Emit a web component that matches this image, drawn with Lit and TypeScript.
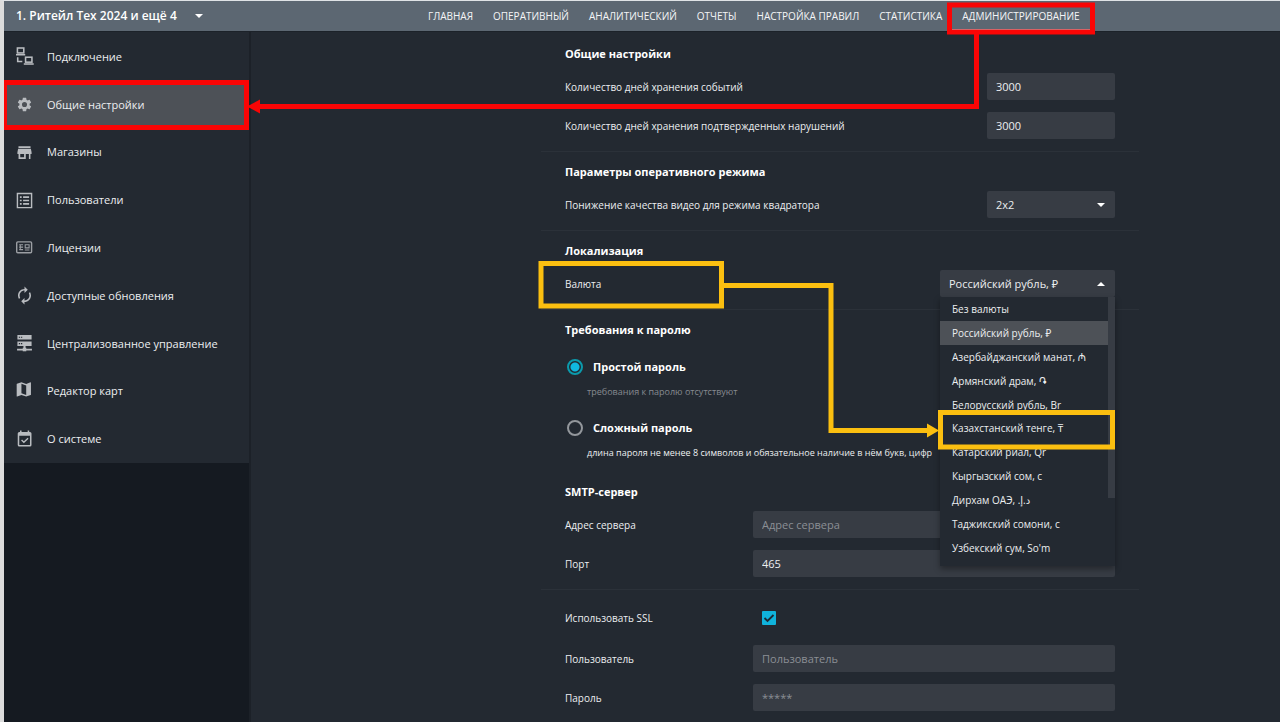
import { LitElement, html, css, svg } from "lit";
import { customElement, state } from "lit/decorators.js";

const icons: Record<string, unknown> = {
  link: svg`<g fill="none" stroke="currentColor" stroke-width="2.2"><rect x="2" y="0" width="9" height="7"/><path d="M0 9.400h13M2.400 13v6h6.500"/><rect x="13.500" y="13" width="9" height="7"/><path d="M11 22.600h14"/></g>`,
  gear: svg`<path fill="currentColor" d="M19.14 12.94c.04-.3.06-.61.06-.94 0-.32-.02-.64-.07-.94l2.03-1.58a.49.49 0 0 0 .12-.61l-1.92-3.32a.49.49 0 0 0-.59-.22l-2.39.96c-.5-.38-1.03-.7-1.62-.94l-.36-2.54a.48.48 0 0 0-.48-.41h-3.84c-.24 0-.43.17-.47.41l-.36 2.54c-.59.24-1.13.57-1.62.94l-2.39-.96a.48.48 0 0 0-.59.22L2.74 8.87c-.12.21-.08.47.12.61l2.03 1.58c-.05.3-.09.63-.09.94s.02.64.07.94l-2.03 1.58a.49.49 0 0 0-.12.61l1.92 3.32c.12.22.37.29.59.22l2.39-.96c.5.38 1.03.7 1.62.94l.36 2.54c.05.24.24.41.48.41h3.84c.24 0 .44-.17.47-.41l.36-2.54c.59-.24 1.13-.56 1.62-.94l2.39.96c.22.08.47 0 .59-.22l1.92-3.32a.48.48 0 0 0-.12-.61zM12 15.6a3.6 3.6 0 1 1 0-7.2 3.6 3.6 0 0 1 0 7.2z"/>`,
  store: svg`<path fill="currentColor" d="M3.500 3h17v2.600h-17zM3 6.600h18l1 5v2.600h-1.600V21h-2.200v-6.800h-4.400V21H3.600v-6.800H2v-2.600zm3 7.600v4.400h5.400v-4.400z"/>`,
  list: svg`<path fill="none" stroke="currentColor" stroke-width="2" d="M2 2h20v20H2z"/><path fill="currentColor" d="M5.500 6h2.500v2.400H5.500zM10 6h8.500v2.400H10zM5.500 10.800h2.500v2.400H5.500zM10 10.800h8.500v2.400H10zM5.500 15.600h2.500V18H5.500zM10 15.600h8.500V18H10z"/>`,
  card: svg`<g opacity=".8"><rect x="1" y="4" width="21" height="15.500" rx="1.500" fill="none" stroke="currentColor" stroke-width="2"/><path fill="none" stroke="currentColor" stroke-width="1.500" d="M4.500 8h5.500M4.500 11.500h5.500M4.500 15h5.500M6 8v7M13 8h5.500v4.500H13zM12.500 15.500h6.500"/></g>`,
  sync: svg`<path fill="currentColor" transform="translate(-1.800 -1.800) scale(1.150)" d="M12 6v3l4-4-4-4v3c-4.420 0-8 3.580-8 8 0 1.570.46 3.030 1.240 4.260L6.700 14.800A5.870 5.870 0 0 1 6 12c0-3.310 2.690-6 6-6zm6.760 1.740L17.300 9.200c.44.84.7 1.790.7 2.800 0 3.310-2.690 6-6 6v-3l-4 4 4 4v-3c4.420 0 8-3.580 8-8 0-1.570-.46-3.030-1.240-4.260z"/>`,
  server: svg`<path fill="currentColor" fill-rule="evenodd" d="M2 0h20v6.500H2zM4 2.300v1.600h1.800V2.300zm3 0v1.600h1.800V2.300zM2 9h20v6.500H2zM4 11.300v1.600h1.800v-1.600zm3 0v1.600h1.800v-1.600zM10.500 15.500h3V19h-3zM1.500 19.500h21v2.300h-21z"/><path fill="currentColor" d="M9.500 18h5v5h-5z"/>`,
  map: svg`<path fill="currentColor" fill-rule="evenodd" transform="translate(-2.400 -4.400) scale(1.120)" d="M20.500 3l-.16.030L15 5.100 9 3 3.360 4.900a.5.5 0 0 0-.36.480V20.500a.5.5 0 0 0 .66.470L9 18.900l6 2.100 5.640-1.900a.5.5 0 0 0 .36-.48V3.500a.5.5 0 0 0-.5-.5zM15 19l-6-2.110V5l6 2.110z"/>`,
  calendar: svg`<g transform="translate(-.8 -1.800) scale(1.080)"><path fill="currentColor" fill-rule="evenodd" d="M19 3h-1V1h-2v2H8V1H6v2H5a2 2 0 0 0-2 2v15a2 2 0 0 0 2 2h14a2 2 0 0 0 2-2V5a2 2 0 0 0-2-2zm0 17H5V8h14z"/><path fill="none" stroke="currentColor" stroke-width="1.800" d="M8 13.500l3 3 5.500-5.500"/></g>`,
};

const sections = [
  "ГЛАВНАЯ", "ОПЕРАТИВНЫЙ", "АНАЛИТИЧЕСКИЙ", "ОТЧЕТЫ",
  "НАСТРОЙКА ПРАВИЛ", "СТАТИСТИКА", "АДМИНИСТРИРОВАНИЕ",
];

const menu = [
  ["link", "Подключение"],
  ["gear", "Общие настройки"],
  ["store", "Магазины"],
  ["list", "Пользователи"],
  ["card", "Лицензии"],
  ["sync", "Доступные обновления"],
  ["server", "Централизованное управление"],
  ["map", "Редактор карт"],
  ["calendar", "О системе"],
];

// The trailing mark keeps the last dot of the dirham sign in its right-to-left run.
const currencies = [
  "Без валюты", "Российский рубль, ₽", "Азербайджанский манат, ₼",
  "Армянский драм, ֏", "Белорусский рубль, Br", "Казахстанский тенге, ₸",
  "Катарский риал, Qr", "Кыргызский сом, с", "Дирхам ОАЭ, د.إ.\u200f",
  "Таджикский сомони, с", "Узбекский сум, So'm",
];

@customElement("app-root")
export class AppRoot extends LitElement {
  @state() private currency = 1;

  static styles = css`
    :host {
      display: flex;
      flex-direction: column;
      position: relative;
      box-sizing: border-box;
      height: 100vh;
      overflow: hidden;
      border-top: 1px solid #dfe3e6;
      border-left: 4px solid #dcdcdc;
      background: #232931;
      color: #eceef0;
      font: 10px/20px "Open Sans", "Noto Sans", "DejaVu Sans", sans-serif;
    }
    *, *::before, *::after { box-sizing: border-box; }
    button, input, select { font: inherit; color: inherit; }
    header {
      flex: none;
      display: grid;
      grid-template-columns: 423fr auto 200fr;
      align-items: center;
      height: 31px;
      background: #5c6772;
      border-bottom: 1px solid #1c2229;
    }
    .site {
      justify-self: start;
      display: flex;
      align-items: center;
      gap: 18px;
      padding: 0 12px;
      border: 0;
      background: none;
      font-size: 12px;
      font-weight: 600;
      color: #fff;
    }
    .caret { width: 8px; height: 4px; fill: #fff; }
    .tabs { display: flex; gap: 20px; }
    .tabs a { position: relative; color: #f4f5f7; text-decoration: none; font-weight: 500; line-height: 28px; white-space: nowrap; }
    .tabs a.active::after { content: ""; position: absolute; left: -10px; right: -10px; bottom: 0; height: 1px; background: #b9c0c6; }
    .body { flex: 1; display: flex; min-height: 0; }
    aside { flex: none; width: 247px; background: #151a21; border-right: 2px solid #1c2128; }
    .menu {
      display: grid;
      grid-auto-rows: 1fr;
      height: 431px;
      padding-top: 1px;
      background: #232931;
    }
    .menu a {
      display: flex;
      align-items: center;
      gap: 14px;
      padding-left: 12px;
      color: inherit;
      font-size: 11px;
      text-decoration: none;
    }
    .menu a.active { background: #4d5157; }
    .menu svg { width: 17px; height: 17px; color: #b9bcc0; overflow: visible; }
    main {
      flex: 1;
      display: grid;
      grid-template-columns: 290fr minmax(auto, 598px) 141fr;
      align-content: start;
      padding-top: 2px;
    }
    form { grid-column: 2; }
    section { padding: 9px 24px 12px; border-bottom: 1px solid #2b3139; }
    section.open { border-bottom: 0; padding-bottom: 9px; }
    h2 { margin: 0 0 8px; font-size: 11px; line-height: 22px; font-weight: 700; color: #fff; }
    .row { display: flex; align-items: center; justify-content: space-between; height: 27px; }
    .row + .row { margin-top: 12px; }
    .row.wide { display: grid; grid-template-columns: 188px 1fr; }
    .row.tick { margin: 5px 0 14px; }
    .field {
      width: 128px;
      height: 27px;
      padding: 0 9px;
      border: 0;
      border-radius: 2px;
      background: #373c44;
      font-size: 11px;
      outline: none;
      appearance: none;
    }
    .wide .field { width: 100%; }
    .field::placeholder { color: #8b8f95; opacity: 1; }
    .pick { position: relative; }
    .pick > .caret { position: absolute; right: 10px; top: 12px; pointer-events: none; }
    .currency .field { width: 175px; display: block; }
    .list {
      position: absolute;
      z-index: 2;
      top: 100%;
      left: 0;
      right: 0;
      display: grid;
      grid-auto-rows: 1fr;
      height: 269px;
      margin: 0;
      padding: 0 7px 6px 0;
      list-style: none;
      background: #232931;
      box-shadow: 0 3px 6px rgba(0, 0, 0, 0.35);
    }
    .list li { display: flex; align-items: center; padding-left: 12px; white-space: nowrap; }
    .list li.chosen { background: #4d5157; }
    .thumb {
      position: absolute;
      z-index: 3;
      top: 100%;
      right: 0;
      width: 7px;
      height: 201px;
      background: #373c44;
    }
    .choices { display: grid; padding-top: 7px; }
    .choice { display: flex; align-items: center; gap: 10px; height: 22px; padding-left: 2px; font-size: 11px; font-weight: 700; color: #fff; }
    .hint { margin: 4px 0 0 22px; white-space: nowrap; width: 0; font-size: 9px; }
    .hint.muted { margin-bottom: 15px; color: #868a90; }
    input[type="radio"] {
      appearance: none;
      width: 16px;
      height: 16px;
      margin: 0;
      border: 2px solid #93979c;
      border-radius: 50%;
    }
    input[type="radio"]:checked {
      border-color: #0b9aac;
      background: radial-gradient(circle, #10b8e0 0 4px, transparent 5px);
    }
    .check { position: relative; display: flex; justify-self: start; margin-left: 9px; }
    .check input { appearance: none; width: 14px; height: 14px; margin: 0; border-radius: 1px; background: #10b3dc; }
    .check svg { position: absolute; inset: 0; width: 14px; height: 14px; pointer-events: none; }
    .marks { position: absolute; z-index: 5; top: -1px; left: -4px; width: 1280px; height: 722px; pointer-events: none; }
  `;

  private caret(up = false) {
    return html`<svg class="caret" viewBox="0 0 8 4" aria-hidden="true"><path d=${up ? "M0 4L4 0l4 4z" : "M0 0h8L4 4z"} /></svg>`;
  }

  render() {
    return html`
      <header>
        <button class="site" type="button">1. Ритейл Тех 2024 и ещё 4 ${this.caret()}</button>
        <nav class="tabs">${sections.map((s, i) => html`<a href="#" class=${i === 6 ? "active" : ""}>${s}</a>`)}</nav>
      </header>
      <div class="body">
        <aside>
          <nav class="menu">
            ${menu.map(([icon, text], i) => html`
              <a href="#" class=${i === 1 ? "active" : ""}>
                <svg viewBox="0 0 24 24" aria-hidden="true">${icons[icon]}</svg><span>${text}</span>
              </a>`)}
          </nav>
        </aside>
        <main>
          <form>
            <section>
              <h2>Общие настройки</h2>
              <div class="row"><label for="events">Количество дней хранения событий</label><input class="field" id="events" value="3000" /></div>
              <div class="row"><label for="faults">Количество дней хранения подтвержденных нарушений</label><input class="field" id="faults" value="3000" /></div>
            </section>
            <section>
              <h2>Параметры оперативного режима</h2>
              <div class="row">
                <label for="quality">Понижение качества видео для режима квадратора</label>
                <div class="pick"><select class="field" id="quality"><option>2x2</option></select>${this.caret()}</div>
              </div>
            </section>
            <section>
              <h2>Локализация</h2>
              <div class="row">
                <label for="currency">Валюта</label>
                <div class="pick currency">
                  <select class="field" id="currency"><option>${currencies[this.currency]}</option></select>
                  ${this.caret(true)}
                  <ul class="list" role="listbox" aria-label="Валюта">
                    ${currencies.map((c, i) => html`<li role="option" aria-selected=${i === this.currency} class=${i === this.currency ? "chosen" : ""} @click=${() => (this.currency = i)}><span>${c}</span></li>`)}
                  </ul>
                  <div class="thumb"></div>
                </div>
              </div>
            </section>
            <section class="open">
              <h2>Требования к паролю</h2>
              <div class="choices">
                <label class="choice"><input type="radio" name="rule" checked />Простой пароль</label>
                <div class="hint muted">требования к паролю отсутствуют</div>
                <label class="choice"><input type="radio" name="rule" />Сложный пароль</label>
                <div class="hint">длина пароля не менее 8 символов и обязательное наличие в нём букв, цифр</div>
              </div>
            </section>
            <section>
              <h2>SMTP-сервер</h2>
              <div class="row wide"><label for="host">Адрес сервера</label><input class="field" id="host" placeholder="Адрес сервера" /></div>
              <div class="row wide"><label for="port">Порт</label><input class="field" id="port" value="465" /></div>
            </section>
            <section>
              <div class="row wide tick">
                <label for="ssl">Использовать SSL</label>
                <span class="check"><input type="checkbox" id="ssl" checked /><svg viewBox="0 0 14 14" aria-hidden="true"><path d="M2.500 7l3 3 6-6" fill="none" stroke="#1d2a35" stroke-width="1.800" /></svg></span>
              </div>
              <div class="row wide"><label for="user">Пользователь</label><input class="field" id="user" placeholder="Пользователь" /></div>
              <div class="row wide"><label for="pass">Пароль</label><input class="field" id="pass" type="password" placeholder="*****" /></div>
            </section>
          </form>
        </main>
      </div>
      <svg class="marks" viewBox="0 0 1280 722" fill="none" stroke-width="5" aria-hidden="true">
        <g stroke="#fa0505">
          <rect x="949.500" y="5" width="143" height="27" />
          <rect x="4.500" y="82.500" width="242" height="45" />
          <path d="M976.500 34v72.500H258" />
          <path d="M247 106.500l13-7v14z" fill="#fa0505" stroke="none" />
        </g>
        <g stroke="#fbbf10">
          <rect x="541" y="263.500" width="180.500" height="42.500" />
          <rect x="940.500" y="412.500" width="172" height="34.500" />
          <path d="M723 285.500h108v145h98" />
          <path d="M939 430.500l-12-7v14z" fill="#fbbf10" stroke="none" />
        </g>
      </svg>
    `;
  }
}
